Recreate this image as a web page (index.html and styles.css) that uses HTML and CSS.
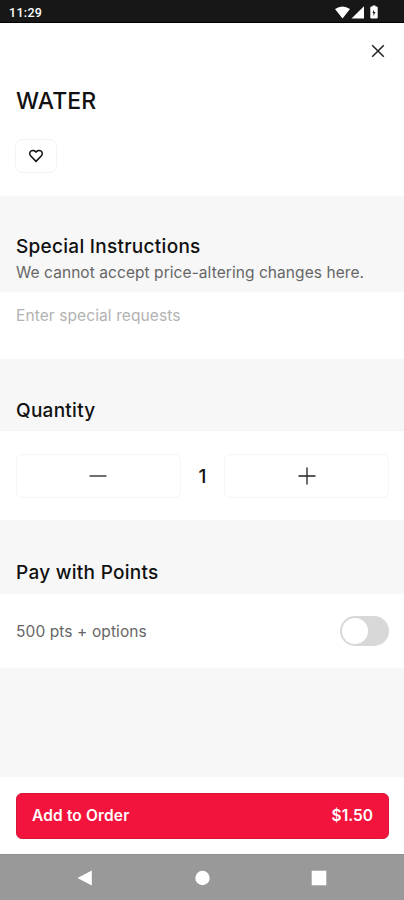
FILE: index.html
```html
<!DOCTYPE html>
<html lang="en">
<head>
<meta charset="utf-8">
<title>Water</title>
<link rel="stylesheet" href="styles.css">
</head>
<body>
<div class="status">
  <span class="time">11:29</span>
  <svg class="status-icons" width="46" height="16" viewBox="0 0 46 16" fill="#fff">
    <path d="M1 4Q8.500 -1.200 16 4L8.500 13.500Z"/>
    <path d="M30 1.200V13.500H17.500Z"/>
    <path fill-rule="evenodd" d="M37.500 1.500H38.500V.6h3V1.500h1q1.200 0 1.200 1V12.500q0 1-1.200 1h-5q-1.200 0-1.200-1V2.500q0-1 1.200-1ZM40 4.500L38.500 8h1v3l2-4H40Z"/>
  </svg>
</div>
<header class="product">
  <button class="close" aria-label="Close">
    <svg width="14" height="14" viewBox="0 0 14 14"><path d="M1.200 1.200 12.800 12.800M12.800 1.200 1.200 12.800"/></svg>
  </button>
  <h1>WATER</h1>
  <button class="favorite" aria-label="Favorite">
    <svg width="16" height="14" viewBox="0 0 16 14"><path d="M8 12.400 3 7.300C1.300 5.500 1.400 3.300 2.700 2.200 4.200.9 6.400 1.200 8 3.100 9.600 1.200 11.800.9 13.300 2.200 14.600 3.300 14.700 5.500 13 7.300Z"/></svg>
  </button>
</header>
<main>
  <section>
    <div class="heading instructions">
      <h2>Special Instructions</h2>
      <p class="note">We cannot accept price-altering changes here.</p>
    </div>
    <div class="panel request"><span class="placeholder">Enter special requests</span></div>
  </section>
  <section>
    <div class="heading quantity"><h2>Quantity</h2></div>
    <div class="panel stepper">
      <button class="step minus" aria-label="Decrease"><svg width="18" height="18" viewBox="0 0 18 18"><path d="M.5 9H17.500"/></svg></button>
      <span class="count">1</span>
      <button class="step" aria-label="Increase"><svg width="18" height="18" viewBox="0 0 18 18"><path d="M.5 9H17.500M9 .5V17.500"/></svg></button>
    </div>
  </section>
  <section>
    <div class="heading points"><h2>Pay with Points</h2></div>
    <div class="panel pay"><span class="pts">500 pts + options</span><span class="toggle"><i class="knob"></i></span></div>
  </section>
</main>
<footer class="order-bar">
  <button class="order"><span class="add">Add to Order</span><span class="price">$1.50</span></button>
</footer>
<nav class="system">
  <svg width="16" height="16" viewBox="0 0 16 16"><path d="M.5 8 14.800.5V15.500Z"/></svg>
  <svg width="16" height="16" viewBox="0 0 16 16"><circle cx="8.500" cy="8" r="7.200"/></svg>
  <svg width="16" height="16" viewBox="0 0 16 16"><path d="M.7.7H15.300V15.300H.7Z"/></svg>
</nav>
</body>
</html>
```
FILE: styles.css
```css
* { box-sizing: border-box; }
body {
  margin: 0;
  height: 900px;
  display: flex;
  flex-direction: column;
  background: #f7f7f7;
  color: #111;
  font-family: Inter, "Liberation Sans", sans-serif;
  overflow: hidden;
}
h1, h2, p { margin: 0; }
button { padding: 0; border: 0; background: none; font: inherit; color: inherit; }
svg { display: block; }
.status {
  height: 23px;
  flex: none;
  background: #171717;
  border-bottom: 1px solid #000;
  color: #fff;
  display: flex;
  justify-content: space-between;
  padding: 4px 24px 0 9px;
}
.time { font: 500 12.5px/18px Roboto, sans-serif; letter-spacing: 0.3px; }
.status-icons { margin: 1px 0 0; }
.product {
  height: 173px;
  flex: none;
  background: #fff;
  display: flex;
  flex-direction: column;
  align-items: flex-start;
  padding: 12px 11px 0 16px;
}
.close {
  align-self: flex-end;
  width: 32px;
  height: 32px;
  display: grid;
  place-items: center;
  margin-right: -1px;
}
.close svg, .favorite svg, .step svg { fill: none; stroke: #222; stroke-width: 1.5; }
h1 { font-size: 23px; line-height: 30px; font-weight: 500; letter-spacing: 0.1px; margin-top: 19px; }
.favorite {
  width: 42px;
  height: 34px;
  margin: 23px 0 0 -1px;
  border: 1px solid #f3f3f3;
  border-radius: 7px;
  display: grid;
  place-items: center;
}
.favorite svg { stroke-width: 1.5; stroke: #111; }
main { flex: 1; }
.heading { padding-left: 16px; }
h2 { font-size: 19px; line-height: 26px; font-weight: 500; letter-spacing: 0.28px; }
.instructions { height: 96px; padding-top: 38px; }
.note, .placeholder, .pts { font-size: 15.5px; line-height: 24px; font-weight: 400; letter-spacing: 0.1px; }
.note { color: #666; letter-spacing: 0.065px; margin-top: 1px; }
.panel { background: #fff; padding: 0 15px 0 16px; }
.request { height: 67px; padding-top: 12px; }
.placeholder { display: block; color: #b2b2b2; }
.quantity { height: 72px; padding-top: 39px; border-bottom: 1px solid #f3f3f3; }
.stepper { height: 89px; display: grid; grid-template-columns: 165px 1fr 165px; align-items: center; }
.step {
  height: 44px;
  border: 1px solid #f5f5f5;
  border-radius: 6px;
  display: grid;
  place-items: center;
}
.step svg { stroke-width: 1.3; }
.minus { padding-right: 1px; }
.count { text-align: center; font-size: 19px; line-height: 26px; font-weight: 500; padding-top: 2px; }
.points { height: 74px; padding-top: 40px; }
.pay { height: 74px; display: flex; align-items: center; justify-content: space-between; }
.pts { color: #666; padding-top: 1px; }
.toggle { width: 49px; height: 30px; border-radius: 15px; background: #d8d8d8; padding: 2px; }
.knob { display: block; width: 26px; height: 26px; border-radius: 50%; background: #fff; }
.order-bar { height: 77px; flex: none; background: #fff; padding: 16px 15px 0 16px; }
.order {
  width: 100%;
  height: 46px;
  border-radius: 6px;
  border: 1px solid #d81639;
  background: #f2143d;
  color: #fff;
  display: flex;
  align-items: center;
  justify-content: space-between;
  padding: 0 15px 1px;
  font-size: 15.5px;
  font-weight: 600;
}
.add { letter-spacing: 0.15px; }
.system {
  height: 46px;
  flex: none;
  background: #999;
  border-top: 1px solid #919191;
  display: flex;
  justify-content: space-between;
  align-items: center;
  padding: 0 77px;
  fill: #fff;
}
```
